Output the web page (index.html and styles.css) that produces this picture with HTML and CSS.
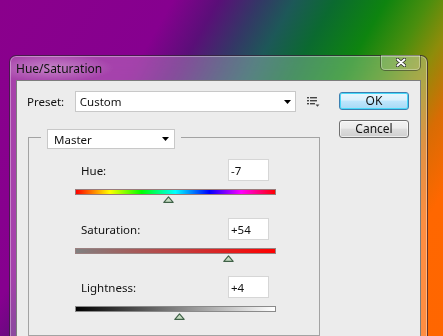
FILE: index.html
```html
<!DOCTYPE html>
<html lang="en">

<head>
  <meta charset="UTF-8">
  <link rel="stylesheet" href="styles.css">
  <title>Hue/Saturation</title>
</head>

<body>
  <div class="desktop">
    <div class="window">
      <div class="titlebar">
        <span class="title">Hue/Saturation</span>
        <div class="close">
          <svg width="10" height="9" viewBox="0 0 10 9">
            <path d="M1.5 1.5 L8.5 7.5 M8.5 1.5 L1.5 7.5" stroke="#2a2a2a" stroke-width="3.6" stroke-linecap="round" />
            <path d="M1.5 1.5 L8.5 7.5 M8.5 1.5 L1.5 7.5" stroke="#fff" stroke-width="2" stroke-linecap="round" />
          </svg>
        </div>
      </div>

      <div class="client">
        <div class="main">
          <!-- preset row -->
          <div class="preset-row">
            <span class="preset-label">Preset:</span>
            <div class="dropdown preset-select">
              <span>Custom</span>
              <svg class="caret" width="7" height="4" viewBox="0 0 7 4"><polygon points="0,0 7,0 3.5,4" fill="#000" /></svg>
            </div>
            <svg class="preset-menu" width="13" height="10" viewBox="0 0 13 10">
              <rect x="0" y="0" width="2" height="1.4" fill="#444" />
              <rect x="3" y="0" width="7" height="1.4" fill="#444" />
              <rect x="0" y="3" width="2" height="1.4" fill="#444" />
              <rect x="3" y="3" width="7" height="1.4" fill="#444" />
              <rect x="0" y="6" width="2" height="1.4" fill="#444" />
              <rect x="3" y="6" width="5" height="1.4" fill="#444" />
              <polygon points="8.5,7.5 12.5,7.5 10.5,9.8" fill="#444" />
            </svg>
          </div>

          <!-- adjustments group -->
          <div class="group">
            <div class="group-head">
              <div class="dropdown channel-select">
                <span>Master</span>
                <svg class="caret" width="7" height="4" viewBox="0 0 7 4"><polygon points="0,0 7,0 3.5,4" fill="#000" /></svg>
              </div>
            </div>

            <div class="adj">
              <div class="adj-row">
                <span class="adj-label">Hue:</span>
                <input class="adj-value" type="text" value="-7">
              </div>
              <div class="bar bar-hue"></div>
              <div class="track">
                <svg class="thumb" style="--pos: 46.3%" width="11" height="7" viewBox="0 0 11 7"><polygon points="0.8,6.4 5.5,0.8 10.2,6.4" fill="#c6dcc2" stroke="#3f6147" stroke-width="1.1" stroke-linejoin="round" /></svg>
              </div>
            </div>

            <div class="adj">
              <div class="adj-row">
                <span class="adj-label">Saturation:</span>
                <input class="adj-value" type="text" value="+54">
              </div>
              <div class="bar bar-sat"></div>
              <div class="track">
                <svg class="thumb" style="--pos: 76.6%" width="11" height="7" viewBox="0 0 11 7"><polygon points="0.8,6.4 5.5,0.8 10.2,6.4" fill="#c6dcc2" stroke="#3f6147" stroke-width="1.1" stroke-linejoin="round" /></svg>
              </div>
            </div>

            <div class="adj adj-last">
              <div class="adj-row">
                <span class="adj-label">Lightness:</span>
                <input class="adj-value" type="text" value="+4">
              </div>
              <div class="bar bar-light"></div>
              <div class="track">
                <svg class="thumb" style="--pos: 52.2%" width="11" height="7" viewBox="0 0 11 7"><polygon points="0.8,6.4 5.5,0.8 10.2,6.4" fill="#c6dcc2" stroke="#3f6147" stroke-width="1.1" stroke-linejoin="round" /></svg>
              </div>
            </div>
          </div>
        </div>

        <div class="buttons">
          <button class="btn btn-default">OK</button>
          <button class="btn">Cancel</button>
        </div>
      </div>
    </div>
  </div>
</body>

</html>
```

FILE: styles.css
```css
html,
body {
  margin: 0;
  padding: 0;
}

body {
  font-family: "Noto Sans", "Open Sans", sans-serif;
  font-size: 11.5px;
  color: #111;
  overflow: hidden;
}

.desktop {
  width: 443px;
  height: 336px;
  box-sizing: border-box;
  padding: 55px 0 0 9px;
  overflow: hidden;
  background: linear-gradient(120deg,
      #8a008c 0px,
      #86008f 150px,
      #5a0f78 190px,
      #343766 225px,
      #1d5858 255px,
      #0b6a30 290px,
      #0e840f 335px,
      #4a8e0e 372px,
      #8e8c0a 402px,
      #d86c04 438px,
      #ff6700 480px,
      #ff6600 552px);
}

/* window frame */
.window {
  width: 419px;
  height: 300px;
  box-sizing: border-box;
  display: flex;
  flex-direction: column;
  padding: 0 6px;
  border: 1px solid rgba(25, 5, 30, 0.65);
  border-bottom: none;
  border-radius: 7px 7px 0 0;
  background: rgba(255, 255, 255, 0.26);
  backdrop-filter: blur(8px);
  box-shadow: inset 0 0 0 1px rgba(255, 255, 255, 0.35);
}

.titlebar {
  height: 24px;
  display: flex;
  justify-content: space-between;
  align-items: center;
  background: radial-gradient(ellipse 62px 14px at 42px 12px, rgba(255, 255, 255, 0.35), rgba(255, 255, 255, 0));
  margin: 0 -6px;
  padding: 0 6px;
}

.title {
  color: #111;
  font-size: 12px;
}

.close {
  align-self: flex-start;
  margin-top: -1px;
  width: 41px;
  height: 16px;
  box-sizing: border-box;
  display: flex;
  align-items: center;
  justify-content: center;
  border: 1px solid rgba(30, 30, 20, 0.5);
  border-top: none;
  border-radius: 0 0 5px 5px;
  background: rgba(255, 255, 255, 0.1);
  box-shadow: inset 0 0 0 1px rgba(255, 255, 255, 0.3);
}

/* dialog body */
.client {
  flex: 1;
  display: flex;
  background-color: #ececec;
  border: 1px solid #7d7d7d;
  border-bottom: none;
  padding: 10px 11px 0 10px;
}

.main {
  width: 293px;
}

.preset-row {
  display: flex;
  align-items: center;
  height: 21px;
}

.preset-label {
  width: 48px;
}

.dropdown {
  display: flex;
  align-items: center;
  justify-content: space-between;
  box-sizing: border-box;
  background-color: #fff;
  border: 1px solid #c8c8c8;
}

.preset-select {
  width: 222px;
  height: 21px;
  padding: 0 4px 0 4px;
}

.preset-menu {
  margin-left: 11px;
}

.group {
  margin: 25px 0 0 1px;
  width: 292px;
  height: 199px;
  box-sizing: border-box;
  border: 1px solid #a3a3a3;
}

.group-head {
  width: fit-content;
  margin: -9px 0 0 12px;
  padding: 0 6px;
  background-color: #ececec;
}

.channel-select {
  width: 128px;
  height: 20px;
  padding: 0 5px 0 6px;
}

.adj {
  margin-left: 46px;
  width: 201px;
}

.adj + .adj {
  margin-top: 15px;
}

.adj + .adj-last {
  margin-top: 14px;
}

.group-head + .adj {
  margin-top: 10px;
}

.adj-row {
  display: flex;
  justify-content: space-between;
  align-items: center;
  height: 22px;
  padding: 0 7px 0 6px;
}

.adj-value {
  width: 41px;
  height: 22px;
  box-sizing: border-box;
  border: 1px solid #d6d6d6;
  padding: 0 2px;
  font-family: inherit;
  font-size: 11.5px;
  color: #111;
  background-color: #fff;
}

.bar {
  margin-top: 8px;
  height: 6px;
  box-sizing: border-box;
  border: 1px solid #8a8a8a;
}

.bar-hue {
  border-color: #9a7a7a;
  background: linear-gradient(90deg, #ff0000, #ffff00 17%, #00ff00 33%, #00ffff 50%, #0000ff 67%, #ff00ff 83%, #ff0000);
}

.bar-sat {
  border-color: #9a8080;
  background: linear-gradient(90deg, #808080, #ff0000);
}

.bar-light {
  background: linear-gradient(90deg, #000, #808080 50%, #fff);
}

.track {
  margin-top: 1px;
  height: 7px;
}

.thumb {
  display: block;
  margin-left: calc(var(--pos) - 5.5px);
}

/* buttons */
.buttons {
  margin-left: auto;
  width: 70px;
  padding-top: 1px;
  display: flex;
  flex-direction: column;
}

.btn {
  height: 18px;
  padding: 0;
  font-family: inherit;
  font-size: 12px;
  color: #111;
  line-height: 14px;
  border: 1px solid #707070;
  border-radius: 3px;
  background: linear-gradient(#f2f2f2, #ebebeb 45%, #dddddd 50%, #cfcfcf);
  box-shadow: inset 0 0 0 1px rgba(255, 255, 255, 0.6);
}

.btn + .btn {
  margin-top: 10px;
}

.btn-default {
  border-color: #3c7fb1;
  background: linear-gradient(#eaf6fd, #d9f0fc 45%, #bee6fd 50%, #a7d9f5);
  box-shadow: inset 0 0 0 1px #48d9f9;
}
```
